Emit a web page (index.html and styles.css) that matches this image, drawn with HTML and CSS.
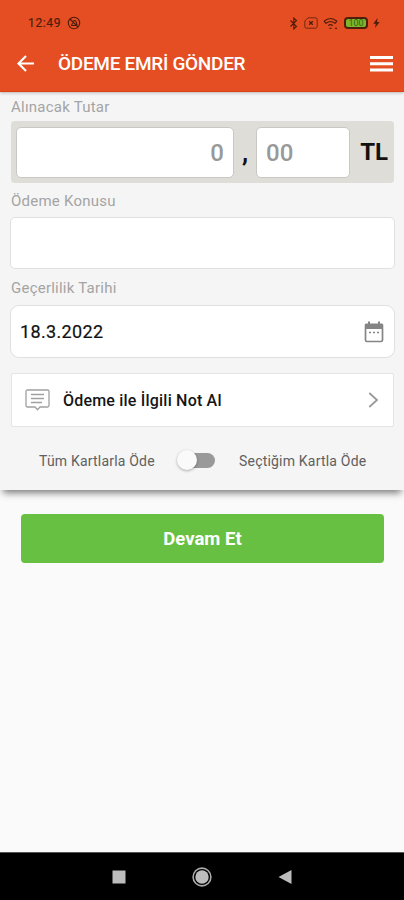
FILE: index.html
```html
<!DOCTYPE html>
<html lang="tr">
<head>
<meta charset="utf-8">
<title>Ödeme Emri Gönder</title>
<link rel="stylesheet" href="styles.css">
</head>
<body>
<div class="screen">
  <header class="header">
    <div class="status">
      <span class="time">12:49</span>
      <svg width="14" height="14" viewBox="0 0 14 14" fill="none" stroke="currentColor" stroke-width="1.1"><circle cx="7" cy="7" r="5.700"/><path d="M3 3l8 8M4 9.500c2 0 1-5 3.500-5s1.500 4 3 5M4 9.500h5"/></svg>
      <div class="status-icons">
        <svg width="10" height="13" viewBox="0 0 10 13" fill="none" stroke="currentColor" stroke-width="1.100"><path d="M1.500 3.500l6 6L4.800 12V1l2.700 2.500-6 6"/></svg>
        <svg width="14" height="12" viewBox="0 0 14 12" fill="none" stroke="currentColor"><path d="M4 .8h7.500q1.700 0 1.700 1.700v7q0 1.700-1.700 1.700h-9Q.8 11.200.8 9.500V4z" opacity=".75"/><path d="M5.200 4.200l3.600 3.600m0-3.600L5.200 7.800" stroke-width="1.300"/></svg>
        <svg width="16" height="13" viewBox="0 0 16 13" fill="none" stroke="currentColor" stroke-width="1.200"><path d="M1 4.200Q7.500-1.200 14 4.200M3 6.400q4.500-3.800 9 0M5.200 8.600q2.300-2 4.600 0M1 4.200l2 2.200M14 4.200l-2 2.200"/><path d="M6.500 11.300h2M12 11.300h2"/></svg>
        <span class="battery">100</span>
        <svg width="7" height="10" viewBox="0 0 7 10" fill="currentColor"><path d="M4.500 0L.3 5.700h2.500L2 10l4.600-5.900H4z"/></svg>
      </div>
    </div>
    <div class="titlebar">
      <svg width="18" height="18" viewBox="0 0 18 18" fill="none" stroke="currentColor" stroke-width="2.200"><path d="M17 8.500H2M9 1L1.500 8.500 9 16"/></svg>
      <h1 class="title">ÖDEME EMRİ GÖNDER</h1>
      <svg class="menu" width="23" height="16" viewBox="0 0 23 16" fill="currentColor"><path d="M0 0h23v3H0zM0 6.300h23v3H0zM0 12.600h23v3H0z"/></svg>
    </div>
  </header>
  <main class="form">
    <div class="label">Alınacak Tutar</div>
    <div class="amount">
      <div class="box whole">0</div>
      <span class="comma">,</span>
      <div class="box cents">00</div>
      <span class="currency">TL</span>
    </div>
    <div class="label subject-label">Ödeme Konusu</div>
    <div class="field"></div>
    <div class="label date-label">Geçerlilik Tarihi</div>
    <div class="field date">
      <span>18.3.2022</span>
      <svg width="20" height="22" viewBox="0 0 20 22" fill="none" stroke="#858585"><path d="M1.500 8V19q0 1.500 1.500 1.500h14q1.500 0 1.500-1.500V8" stroke-width="1.700"/><path d="M.700 8V4q0-1.500 1.500-1.500h15.600q1.500 0 1.500 1.500v4z" fill="#858585" stroke="none"/><path d="M5 .5v3M15 .5v3" stroke-width="2"/><path d="M5 11.500h2M9 11.500h2M13 11.500h2" stroke-width="1.500"/></svg>
    </div>
    <div class="note">
      <svg width="25" height="22" viewBox="0 0 25 22" fill="none" stroke="#a0a0a0" stroke-width="1.300"><path d="M2.500 1h20q1.500 0 1.500 1.500v14q0 1.500-1.500 1.500H15l-2.500 2.700L10 18H2.500Q1 18 1 16.500v-14Q1 1 2.500 1z"/><path d="M6 5.500h13M6 9.500h13M6 13.500h11"/></svg>
      <span class="note-text">Ödeme ile İlgili Not Al</span>
      <svg class="chevron" width="11" height="16" viewBox="0 0 11 16" fill="none" stroke="#999" stroke-width="1.800"><path d="M1.300 1L9 8l-7.700 7"/></svg>
    </div>
    <div class="choice">
      <span class="choice-text all">Tüm Kartlarla Öde</span>
      <span class="switch"><span class="knob"></span></span>
      <span class="choice-text">Seçtiğim Kartla Öde</span>
    </div>
  </main>
  <section class="action"><div class="submit">Devam Et</div></section>
  <nav class="nav">
    <svg width="14" height="14" viewBox="0 0 14 14"><path d="M.500.500h13v13H.500z" fill="#bdbdbd"/></svg>
    <svg width="20" height="20" viewBox="0 0 20 20"><circle cx="10" cy="10" r="8.900" fill="none" stroke="#aaa" stroke-width="1.600"/><circle cx="10" cy="10" r="6.700" fill="#bdbdbd"/></svg>
    <svg width="14" height="14" viewBox="0 0 14 14"><path d="M13.500 0v14L.500 7z" fill="#bdbdbd"/></svg>
  </nav>
</div>
</body>
</html>
```
FILE: styles.css
```css
* { box-sizing: border-box; }
body { margin: 0; font-family: Roboto, sans-serif; background: #fafafa; }
svg { display: block; flex: none; }
.screen { width: 404px; height: 900px; display: flex; flex-direction: column; overflow: hidden; }
.header { height: 92px; flex: none; padding-top: 11px; background: #e54e22; position: relative; z-index: 2; box-shadow: 0 1px 3px rgba(0,0,0,.25); border-bottom: 1px solid #dd4110; }
.status { height: 24px; padding: 0 24px 0 28px; display: flex; align-items: center; color: #4e1d0c; }
.time { font-size: 12px; font-weight: 400; letter-spacing: .65px; width: 39px; -webkit-text-stroke: .2px; }
.status-icons { margin-left: auto; display: flex; align-items: center; gap: 5px; }
.battery { width: 24px; height: 12px; border: 2px solid #4e1d0c; border-radius: 4px; background: #7fb52b; color: #2c650f; font-size: 9px; line-height: 8px; font-weight: 400; text-align: center; display: flex; justify-content: center; }
.titlebar { height: 57px; display: flex; align-items: center; padding: 0 11px 0 17px; color: #fff; }
.title { margin: 0 0 0 23px; font-size: 19px; font-weight: 500; letter-spacing: -.3px; white-space: nowrap; }
.menu { margin-left: auto; }
.form { height: 398px; flex: none; background: #f5f5f5; padding: 0 9px 0 10px; position: relative; z-index: 1; box-shadow: 0 6px 7px -3px rgba(0,0,0,.5); }
.label { height: 29px; line-height: 30px; padding-left: 1px; font-size: 15px; color: #a4a4a4; letter-spacing: .23px; white-space: nowrap; }
.amount { height: 62px; margin: 0 1px; padding: 0 6px 0 5px; background: #dfddd8; border-radius: 4px; display: flex; align-items: center; color: #111; }
.box { height: 51px; background: #fff; border: 1px solid #c9c8c5; border-radius: 5px; color: #999; font-size: 24px; font-weight: 500; line-height: 50px; padding: 0 9px; }
.whole { width: 218px; text-align: right; }
.comma { width: 22px; text-align: center; font-size: 25px; font-weight: 700; }
.cents { width: 94px; }
.currency { margin-left: auto; font-size: 24px; font-weight: 700; }
.subject-label { height: 34px; line-height: 36px; }
.field { height: 52px; background: #fff; border: 1px solid #e0e0e0; border-radius: 5px; }
.date-label { height: 36px; line-height: 38px; }
.date { height: 53px; border-radius: 9px; padding: 0 10px 0 9px; display: flex; justify-content: space-between; align-items: center; font-size: 18px; color: #111; letter-spacing: .35px; -webkit-text-stroke: .2px; }
.note { height: 54px; margin: 15px 1px 0; background: #fff; border: 1px solid #e4e4e4; border-radius: 2px; padding: 0 14px 0 13px; display: flex; align-items: center; }
.note-text { margin-left: 13px; font-size: 16px; font-weight: 500; color: #151515; letter-spacing: .2px; white-space: nowrap; }
.chevron { margin-left: auto; }
.choice { height: 67px; display: flex; align-items: center; padding-left: 29px; }
.choice-text { font-size: 14px; color: #606060; white-space: nowrap; letter-spacing: .2px; }
.all { width: 145px; }
.switch { width: 31px; height: 15px; border-radius: 8px; background: #999; margin-right: 24px; position: relative; }
.knob { position: absolute; left: -7px; top: -3px; width: 20px; height: 20px; border-radius: 50%; background: #fafafa; box-shadow: 0 1px 3px rgba(0,0,0,.3); }
.action { flex: 1; padding: 24px 20px 0 21px; }
.submit { height: 49px; border-radius: 4px; background: #68c043; color: #fff; text-align: center; font-size: 18.500px; font-weight: 700; line-height: 50px; }
.nav { height: 48px; flex: none; background: #000; border-top: 1px solid #555; display: flex; align-items: center; justify-content: space-between; padding: 0 112px; }
```
